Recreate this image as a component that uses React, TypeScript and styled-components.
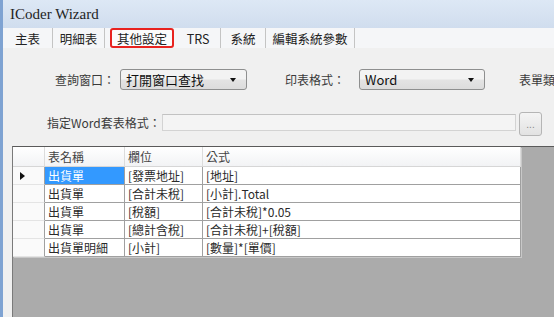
import React from 'react'
import styled, { createGlobalStyle } from 'styled-components'

const GlobalStyle = createGlobalStyle`
  html, body {
    margin: 0;
    padding: 0;
    background: #f0f0f0;
  }
  body {
    font-family: 'Noto Sans CJK TC', 'Noto Sans', sans-serif;
  }
`

const Window = styled.div`
  width: 554px;
  height: 317px;
  overflow: hidden;
  display: flex;
  flex-direction: column;
  background: #f0f0f0;
  border-left: 3px solid #7fa3d2;
  box-sizing: border-box;
`

const TitleBar = styled.div`
  height: 28px;
  flex: none;
  display: flex;
  align-items: center;
  padding-left: 7px;
  background: linear-gradient(#dde8f5, #d0ddee);
  font-family: 'Liberation Serif', serif;
  font-size: 15px;
  color: #1e1e1e;
`

const TabStrip = styled.div`
  height: 20px;
  flex: none;
  display: flex;
  align-items: stretch;
  background: #f5f6f8;
`

const Tab = styled.div<{ $w: number; $active?: boolean }>`
  width: ${(p) => p.$w}px;
  box-sizing: border-box;
  display: flex;
  align-items: center;
  justify-content: center;
  font-size: 12.5px;
  color: #222;
  border-right: 1px solid #c4c4c4;
  ${(p) =>
    p.$active &&
    `
    border: 2.5px solid #e8231f;
    border-radius: 3px;
    background: #fbfbfb;
    margin: 0 2px 0 5px;
  `}
`

const Body = styled.div`
  flex: 1;
  display: flex;
  flex-direction: column;
`

const FormRow = styled.div<{ $top: number }>`
  display: flex;
  align-items: center;
  white-space: nowrap;
  margin-top: ${(p) => p.$top}px;
`

const Label = styled.div<{ $left: number; $w: number }>`
  margin-left: ${(p) => p.$left}px;
  width: ${(p) => p.$w}px;
  flex: none;
  font-size: 12px;
  color: #3a3a3a;
`

const Combo = styled.div<{ $w: number }>`
  width: ${(p) => p.$w}px;
  height: 21px;
  flex: none;
  box-sizing: border-box;
  border: 1px solid #8e8f8f;
  border-radius: 3px;
  background: linear-gradient(#f3f3f3 45%, #e3e3e3 55%, #dcdcdc);
  display: flex;
  align-items: center;
  justify-content: space-between;
  padding: 0 10px 0 5px;
  font-size: 13px;
  color: #111;
`

const Arrow = styled.span`
  width: 0;
  height: 0;
  border-left: 3.5px solid transparent;
  border-right: 3.5px solid transparent;
  border-top: 4px solid #111;
`

const TextBox = styled.div`
  width: 354px;
  height: 17px;
  flex: none;
  box-sizing: border-box;
  border: 1px solid #d3d3d3;
  border-top-color: #c2c2c2;
  background: #f4f4f4;
`

const BrowseButton = styled.div`
  width: 23px;
  height: 24px;
  flex: none;
  margin: 3px 0 0 3px;
  box-sizing: border-box;
  border: 1px solid #b5b5b5;
  border-radius: 3px;
  background: linear-gradient(#f4f4f4, #e2e2e2);
  display: flex;
  align-items: center;
  justify-content: center;
  font-size: 10px;
  color: #888;
  font-family: 'Liberation Sans', sans-serif;
`

const GridFrame = styled.div`
  flex: 1;
  margin: 10px 0 0 9px;
  border-top: 1px solid #5a5a5a;
  border-left: 1px solid #7a7a7a;
  background: #ababab;
`

const Table = styled.div`
  width: 508px;
  display: grid;
  grid-template-columns: 32px 80px 78px 1fr;
  background: #fff;
  font-size: 12px;
  box-shadow: 1px 1px 0 #c8c8c8;
`

const HeadCell = styled.div`
  height: 20px;
  box-sizing: border-box;
  display: flex;
  align-items: center;
  padding-left: 3px;
  color: #444;
  background: linear-gradient(#ffffff, #f2f3f5);
  border-right: 1px solid #dcdcdc;
  border-bottom: 1px solid #d6d6d6;
`

const RowHead = styled.div`
  height: 18px;
  box-sizing: border-box;
  display: flex;
  align-items: center;
  padding-left: 7px;
  background: #fafafa;
  border-right: 1px solid #a0a0a0;
  border-bottom: 1px solid #e4e4e4;
`

const Pointer = styled.span`
  width: 0;
  height: 0;
  border-top: 4.5px solid transparent;
  border-bottom: 4.5px solid transparent;
  border-left: 5px solid #111;
`

const Cell = styled.div<{ $selected?: boolean }>`
  height: 18px;
  box-sizing: border-box;
  display: flex;
  align-items: center;
  padding-left: 3px;
  white-space: nowrap;
  overflow: hidden;
  color: ${(p) => (p.$selected ? '#fff' : '#2a2a2a')};
  background: ${(p) => (p.$selected ? '#3399ff' : '#fff')};
  border-right: 1px solid #a0a0a0;
  border-bottom: 1px solid #a0a0a0;
`

const tabs = [
  { label: '主表', w: 50 },
  { label: '明細表', w: 52 },
  { label: '其他設定', w: 64, active: true },
  { label: 'TRS', w: 45 },
  { label: '系統', w: 45 },
  { label: '編輯系統參數', w: 89 },
]

const rows = [
  ['出貨單', '[發票地址]', '[地址]'],
  ['出貨單', '[合計未稅]', '[小計].Total'],
  ['出貨單', '[稅額]', '[合計未稅]*0.05'],
  ['出貨單', '[總計含稅]', '[合計未稅]+[稅額]'],
  ['出貨單明細', '[小計]', '[數量]*[單價]'],
]

export default function App() {
  return (
    <>
      <GlobalStyle />
      <Window>
        <TitleBar>ICoder Wizard</TitleBar>
        <TabStrip>
          {tabs.map((t) => (
            <Tab key={t.label} $w={t.w} $active={t.active}>
              {t.label}
            </Tab>
          ))}
        </TabStrip>
        <Body>
          <FormRow $top={21}>
            <Label $left={52} $w={65}>查詢窗口：</Label>
            <Combo $w={127}>
              打開窗口查找
              <Arrow />
            </Combo>
            <Label $left={38} $w={74}>印表格式：</Label>
            <Combo $w={126}>
              Word
              <Arrow />
            </Combo>
            <Label $left={34} $w={60}>表單類型</Label>
          </FormRow>
          <FormRow $top={19}>
            <Label $left={44} $w={115}>指定Word套表格式：</Label>
            <TextBox />
            <BrowseButton>...</BrowseButton>
          </FormRow>
          <GridFrame>
            <Table>
              <HeadCell />
              <HeadCell>表名稱</HeadCell>
              <HeadCell>欄位</HeadCell>
              <HeadCell>公式</HeadCell>
              {rows.map((r, i) => (
                <React.Fragment key={i}>
                  <RowHead>{i === 0 && <Pointer />}</RowHead>
                  <Cell $selected={i === 0}>{r[0]}</Cell>
                  <Cell>{r[1]}</Cell>
                  <Cell>{r[2]}</Cell>
                </React.Fragment>
              ))}
            </Table>
          </GridFrame>
        </Body>
      </Window>
    </>
  )
}
